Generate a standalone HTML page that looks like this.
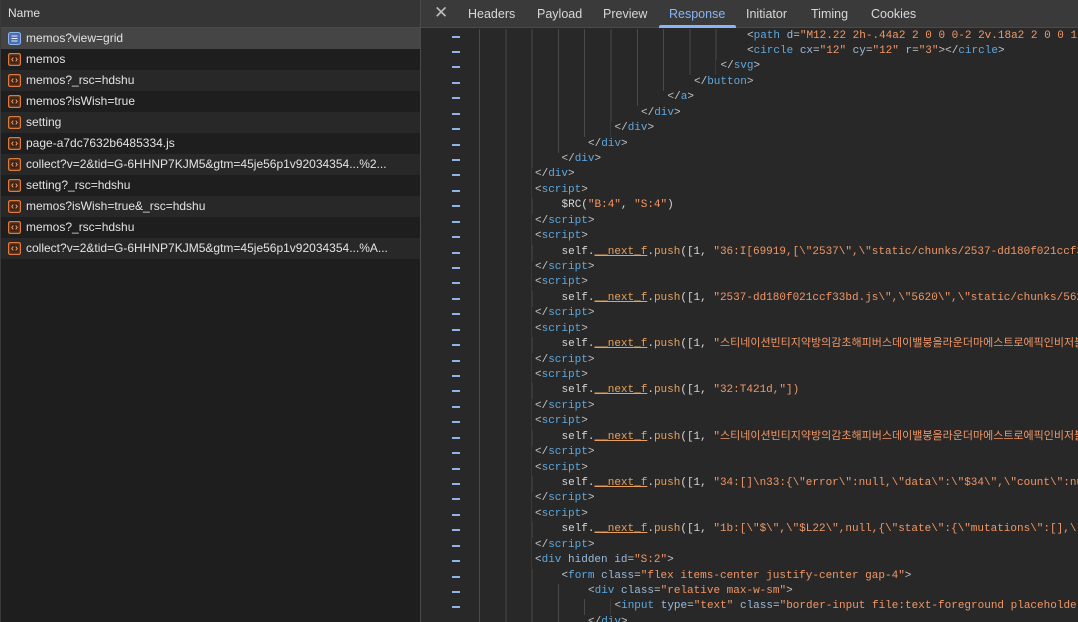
<!DOCTYPE html>
<html><head><meta charset="utf-8"><style>
*{margin:0;padding:0;box-sizing:border-box}
body{width:1078px;height:622px;overflow:hidden;background:#1e1e1e;font-family:"Liberation Sans",sans-serif;position:relative}
#left{position:absolute;left:0;top:0;width:420px;height:622px;background:#1e1e1e;border-left:1px solid #3a3a3a;overflow:hidden}
#lh{height:28px;background:#353535;border-bottom:1px solid #4a4a4a;color:#e3e3e3;font-size:12px;line-height:27px;padding-left:7px}
.r{height:21px;line-height:21px;font-size:12px;color:#e3e3e3;padding-left:25px;position:relative;white-space:nowrap}
.r.l{background:#282828}.r.s{background:#454545}
.r svg{position:absolute;left:7px;top:4px}
#right{position:absolute;left:420px;top:0;width:658px;height:622px;background:#282828;border-left:1px solid #4a4a4a;overflow:hidden}
#tabs{height:28px;background:#3a3a3a;border-bottom:1px solid #4a4a4a;position:relative;font-size:12.5px;color:#d8d8d8}
#tabs span{position:absolute;top:7px}
#tabs .a{color:#8ab4f8}
#ul{position:absolute;left:238px;top:25px;width:77px;height:3px;background:#8ab4f8;border-radius:2px 2px 0 0}
#code{position:absolute;left:0;top:0;width:658px;height:622px;overflow:hidden}
.ln{position:absolute;left:0;height:16px;width:658px;overflow:hidden;font-family:"Liberation Mono","Noto Sans CJK KR",monospace;font-size:11px;line-height:15.45px;color:#d6d6d6;white-space:pre}
.ln .dash{position:absolute;left:31px;top:7px;width:8px;height:2px;background:#8fb4e6}
.ln .g{position:absolute;left:58px;top:0;height:16px;background:repeating-linear-gradient(to right,#4a4a4a 0 1px,transparent 1px 26.3px)}
.ln .t{position:absolute;top:0}
.tg{color:#5ea9e0}.at{color:#9bbbdc}.st{color:#f29766}.p{color:#c5c5c5}.o{color:#e8a15c}
</style></head><body>
<div id="left">
<div id="lh">Name</div>
<div class="r s"><svg width="13" height="13"><rect x=".5" y=".5" width="12" height="12" rx="2" fill="#4a6fb0" stroke="#8db2f0"/><path d="M3.5 4h6M3.5 6.5h6M3.5 9h6" stroke="#e6eeff" stroke-width="1"/></svg>memos?view=grid</div>
<div class="r"><svg class="x"></svg>memos</div>
<div class="r l"><svg class="x"></svg>memos?_rsc=hdshu</div>
<div class="r"><svg class="x"></svg>memos?isWish=true</div>
<div class="r l"><svg class="x"></svg>setting</div>
<div class="r"><svg class="x"></svg>page-a7dc7632b6485334.js</div>
<div class="r l"><svg class="x"></svg>collect?v=2&amp;tid=G-6HHNP7KJM5&amp;gtm=45je56p1v92034354...%2...</div>
<div class="r"><svg class="x"></svg>setting?_rsc=hdshu</div>
<div class="r l"><svg class="x"></svg>memos?isWish=true&amp;_rsc=hdshu</div>
<div class="r"><svg class="x"></svg>memos?_rsc=hdshu</div>
<div class="r l"><svg class="x"></svg>collect?v=2&amp;tid=G-6HHNP7KJM5&amp;gtm=45je56p1v92034354...%A...</div>
</div>
<div id="right">
<div id="tabs">
<span style="left:13px;font-size:17px;top:3px;color:#bbb">✕</span>
<span style="left:47px">Headers</span>
<span style="left:116px">Payload</span>
<span style="left:182px">Preview</span>
<span class="a" style="left:248px">Response</span>
<span style="left:325px">Initiator</span>
<span style="left:390px">Timing</span>
<span style="left:450px">Cookies</span>
<div id="ul"></div>
</div>
<div id="code"></div>
</div>
<script>
document.querySelectorAll('svg.x').forEach(function(s){
 s.setAttribute('width','13');s.setAttribute('height','13');
 s.innerHTML='<rect x="0.5" y="0.5" width="12" height="12" rx="2" fill="#5a3320" stroke="#e07a3c" stroke-width="1.2"/><rect x="2.5" y="2.5" width="8" height="8" fill="#3a2418"/><path d="M5.3 4.6L3.8 6.5L5.3 8.4M7.7 4.6L9.2 6.5L7.7 8.4" stroke="#f0a070" stroke-width="1" fill="none"/>';
});
var L=[
[8,'<span class="p">&lt;</span><span class="tg">path</span> <span class="at">d</span><span class="p">=</span><span class="st">"M12.22 2h-.44a2 2 0 0 0-2 2v.18a2 2 0 0 1-1 1.73l-.43.25a2 2 0 0 1-2 0"</span>'],
[8,'<span class="p">&lt;</span><span class="tg">circle</span> <span class="at">cx</span><span class="p">=</span><span class="st">"12"</span> <span class="at">cy</span><span class="p">=</span><span class="st">"12"</span> <span class="at">r</span><span class="p">=</span><span class="st">"3"</span><span class="p">&gt;&lt;/</span><span class="tg">circle</span><span class="p">&gt;</span>'],
[7,'c:svg'],[6,'c:button'],[5,'c:a'],[4,'c:div'],[3,'c:div'],[2,'c:div'],[1,'c:div'],[0,'c:div'],
[0,'o:script'],[1,'$RC(<span class="st">"B:4"</span>, <span class="st">"S:4"</span>)'],[0,'c:script'],
[0,'o:script'],[1,'s:"36:I[69919,[\\"2537\\",\\"static/chunks/2537-dd180f021ccf33bd.js\\"'],[0,'c:script'],
[0,'o:script'],[1,'s:"2537-dd180f021ccf33bd.js\\",\\"5620\\",\\"static/chunks/5620-abc.js'],[0,'c:script'],
[0,'o:script'],[1,'s:"스티네이션빈티지약방의감초해피버스데이밸붕을라운더마에스트로에픽인비저블유니'],[0,'c:script'],
[0,'o:script'],[1,'s:"32:T421d,"])'],[0,'c:script'],
[0,'o:script'],[1,'s:"스티네이션빈티지약방의감초해피버스데이밸붕을라운더마에스트로에픽인비저블유니'],[0,'c:script'],
[0,'o:script'],[1,'s:"34:[]\\n33:{\\"error\\":null,\\"data\\":\\"$34\\",\\"count\\":null}'],[0,'c:script'],
[0,'o:script'],[1,'s:"1b:[\\"$\\",\\"$L22\\",null,{\\"state\\":{\\"mutations\\":[],\\"queries'],[0,'c:script'],
[0,'<span class="p">&lt;</span><span class="tg">div</span> <span class="at">hidden id</span><span class="p">=</span><span class="st">"S:2"</span><span class="p">&gt;</span>'],
[1,'<span class="p">&lt;</span><span class="tg">form</span> <span class="at">class</span><span class="p">=</span><span class="st">"flex items-center justify-center gap-4"</span><span class="p">&gt;</span>'],
[2,'<span class="p">&lt;</span><span class="tg">div</span> <span class="at">class</span><span class="p">=</span><span class="st">"relative max-w-sm"</span><span class="p">&gt;</span>'],
[3,'<span class="p">&lt;</span><span class="tg">input</span> <span class="at">type</span><span class="p">=</span><span class="st">"text"</span> <span class="at">class</span><span class="p">=</span><span class="st">"border-input file:text-foreground placeholder"</span>'],
[2,'c:div']
];
var h='';
L.forEach(function(e,i){
 var lv=e[0],s=e[1];
 if(s.indexOf('c:')==0)s='<span class="p">&lt;/</span><span class="tg">'+s.slice(2)+'</span><span class="p">&gt;</span>';
 else if(s.indexOf('o:')==0)s='<span class="p">&lt;</span><span class="tg">'+s.slice(2)+'</span><span class="p">&gt;</span>';
 else if(s.indexOf('s:')==0)s='self.<span class="o" style="text-decoration:underline">__next_f</span>.<span class="o">push</span>([1, <span class="st">'+s.slice(2).replace(/</g,'&lt;')+'</span>';
 h+='<div class="ln" style="top:'+Math.round(28.5+i*15.43)+'px"><i class="dash"></i><i class="g" style="width:'+((lv+2)*26.3)+'px"></i><span class="t" style="left:'+(114+lv*26.5)+'px">'+s+'</span></div>';
});
document.getElementById('code').innerHTML=h;
</script>
</body></html>
